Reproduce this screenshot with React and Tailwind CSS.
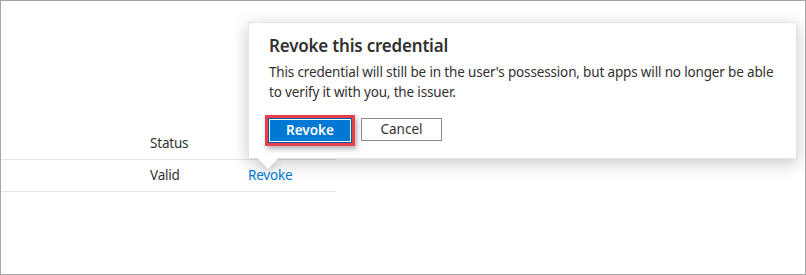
import React from "react";

export default function App() {
  return (
    <div className="relative w-[806px] h-[275px] overflow-hidden border border-[#a6a6a6] bg-white font-['Noto_Sans',sans-serif] text-[#323130]">
      <div className="w-[335px] pt-[126px]">
        <div className="flex h-[33px] items-center border-b border-[#e6e6e6] text-[13.5px] tracking-[-0.2px]">
          <div className="w-[149px]" />
          <div>Status</div>
        </div>
        <div className="flex h-[32px] items-center border-b border-[#e6e6e6] text-[13.5px] tracking-[-0.2px]">
          <div className="w-[149px]" />
          <div className="w-[98px]">Valid</div>
          <div className="text-[#0078d4]">Revoke</div>
        </div>
      </div>

      <div className="absolute left-[247px] top-[21px] w-[549px] h-[137px] border border-[#e3e3e3] bg-white shadow-[0_4px_16px_rgba(0,0,0,0.22)]">
        <div className="absolute left-[12px] bottom-[-8px] h-[14px] w-[14px] rotate-45 bg-white shadow-[3px_3px_6px_rgba(0,0,0,0.12)]" />
        <div className="relative bg-white px-[20px] pt-[11px] h-full">
          <div className="text-[17px] leading-[24px] font-semibold tracking-[-0.2px]">Revoke this credential</div>
          <div className="mt-[4px] whitespace-nowrap text-[13.5px] leading-[20px] tracking-[-0.16px]">
            <div>This credential will still be in the user's possession, but apps will no longer be able</div>
            <div>to verify it with you, the issuer.</div>
          </div>
          <div className="mt-[13px] ml-[-4px] flex items-start gap-[6px]">
            <div className="border-[3px] border-[#e8404a] shadow-[2px_3px_5px_rgba(0,0,0,0.3)]">
              <button className="flex h-[25px] w-[84px] items-center justify-center border border-[#005a9e] bg-[#0078d4] text-[13.5px] font-semibold text-white shadow-[inset_0_0_0_1px_#ffffff]">
                Revoke
              </button>
            </div>
            <button className="mt-[3px] flex h-[23px] w-[81px] items-center justify-center border border-[#8a8886] bg-white text-[13.5px] text-[#323130]">
              Cancel
            </button>
          </div>
        </div>
      </div>
    </div>
  );
}
